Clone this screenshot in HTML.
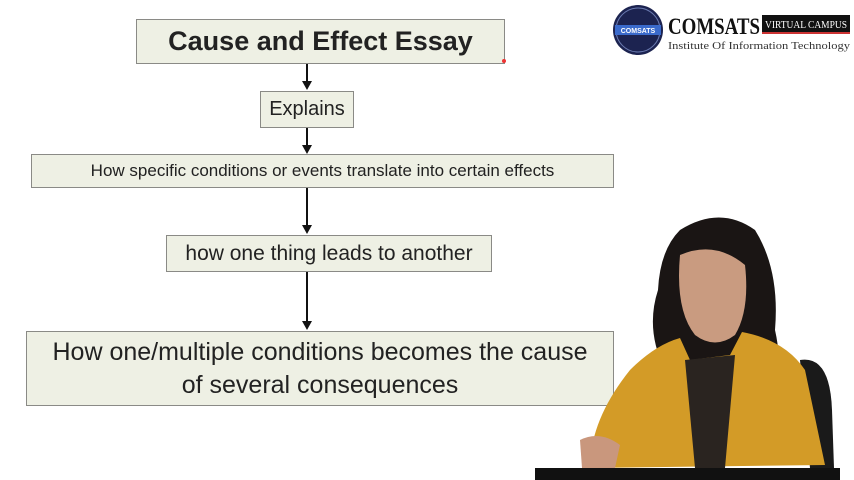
<!DOCTYPE html>
<html><head><style>
body{margin:0;width:854px;height:480px;background:#fff;position:relative;overflow:hidden;font-family:"Liberation Sans",sans-serif}
.b{position:absolute;background:#eef0e4;border:1px solid #8a8a86;box-sizing:border-box;display:flex;align-items:center;justify-content:center;text-align:center;color:#222}
.l{position:absolute;background:#111;width:2px}
.a{position:absolute;width:0;height:0;border-left:5px solid transparent;border-right:5px solid transparent;border-top:9px solid #111}
</style></head><body>
<div class="b" style="left:136px;top:19px;width:369px;height:45px;font-size:27px;font-weight:bold">Cause and Effect Essay</div>
<div style="position:absolute;left:502px;top:59px;width:4px;height:4px;background:#e33;border-radius:50%"></div>
<div class="l" style="left:306px;top:64px;height:20px"></div><div class="a" style="left:302px;top:81px"></div>
<div class="b" style="left:260px;top:91px;width:94px;height:37px;font-size:20px">Explains</div>
<div class="l" style="left:306px;top:128px;height:18px"></div><div class="a" style="left:302px;top:145px"></div>
<div class="b" style="left:31px;top:154px;width:583px;height:34px;font-size:17px">How specific conditions or events translate into certain effects</div>
<div class="l" style="left:306px;top:188px;height:38px"></div><div class="a" style="left:302px;top:225px"></div>
<div class="b" style="left:166px;top:235px;width:326px;height:37px;font-size:21px">how one thing leads to another</div>
<div class="l" style="left:306px;top:272px;height:50px"></div><div class="a" style="left:302px;top:321px"></div>
<div class="b" style="left:26px;top:331px;width:588px;height:75px;font-size:25px;line-height:33px">How one/multiple conditions becomes the cause<br>of several consequences</div>

<svg style="position:absolute;left:612px;top:3px" width="242" height="54">
<circle cx="26" cy="27" r="25" fill="#1c2350"/>
<ellipse cx="26" cy="27" rx="22" ry="22" fill="none" stroke="#6a7ab0" stroke-width="1"/>
<rect x="3" y="22" width="46" height="10" fill="#3a6acb"/>
<text x="26" y="30" font-size="7" fill="#fff" text-anchor="middle" font-family="Liberation Sans" font-weight="bold">COMSATS</text>
<text x="56" y="31" font-size="23" font-family="Liberation Serif" font-weight="bold" fill="#111" textLength="92" lengthAdjust="spacingAndGlyphs">COMSATS</text>
<rect x="150" y="12" width="88" height="17" fill="#111"/>
<rect x="150" y="29" width="88" height="2" fill="#c33"/>
<text x="194" y="25" font-size="11" font-family="Liberation Serif" fill="#fff" text-anchor="middle" textLength="82" lengthAdjust="spacingAndGlyphs">VIRTUAL CAMPUS</text>
<text x="56" y="46" font-size="10" font-family="Liberation Serif" fill="#333" textLength="182" lengthAdjust="spacingAndGlyphs">Institute Of Information Technology</text>
</svg>

<svg style="position:absolute;left:530px;top:210px" width="324" height="270">
<path d="M270 150 Q300 145 302 200 L304 258 L280 258 Z" fill="#1a1a1a"/>
<path d="M150 20 Q190 -5 225 20 Q250 60 245 120 Q255 165 235 160 L135 160 Q115 120 128 80 Q130 40 150 20Z" fill="#1a1514"/>
<path d="M150 45 Q185 30 215 55 Q220 100 205 125 Q185 140 165 125 Q145 100 150 45Z" fill="#c99b80"/>
<path d="M100 160 Q125 135 150 128 L160 150 L200 145 L212 122 Q255 130 275 160 L295 255 L60 258 Q60 210 100 160Z" fill="#d39b27"/>
<path d="M155 150 L205 145 L195 258 L165 258 Z" fill="#2a2420"/>
<path d="M50 230 Q70 220 90 235 L85 258 L52 258Z" fill="#c9977d"/>
<rect x="5" y="258" width="305" height="12" fill="#111"/>
</svg>
</body></html>
